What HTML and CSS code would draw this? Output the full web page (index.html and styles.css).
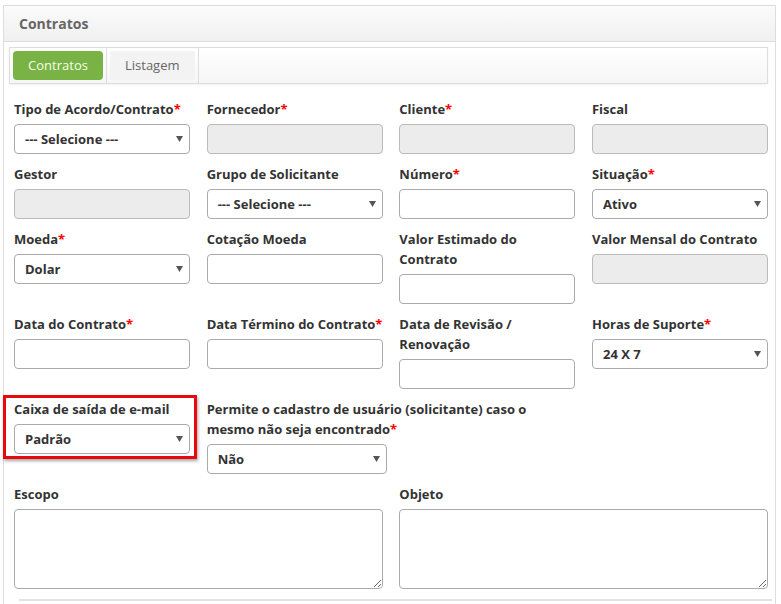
FILE: index.html
```html
<!DOCTYPE html>
<html lang="pt">
<head>
<meta charset="utf-8">
<title>Contratos</title>
<link rel="stylesheet" href="styles.css">
</head>
<body>
<div class="panel">
  <div class="panel-header">Contratos</div>
  <div class="panel-body">
    <ul class="tabs">
      <li class="tab"><span class="tab-link active">Contratos</span></li>
      <li class="tab"><span class="tab-link">Listagem</span></li>
    </ul>
    <form class="form">
      <div class="field">
        <label class="label">Tipo de Acordo/Contrato<span class="req">*</span></label>
        <div class="select"><span>--- Selecione ---</span><svg class="caret" width="7" height="6" viewBox="0 0 7 6"><path d="M0 0H7L3.5 6Z"/></svg></div>
      </div>
      <div class="field">
        <label class="label">Fornecedor<span class="req">*</span></label>
        <div class="input disabled"></div>
      </div>
      <div class="field">
        <label class="label">Cliente<span class="req">*</span></label>
        <div class="input disabled"></div>
      </div>
      <div class="field">
        <label class="label">Fiscal</label>
        <div class="input disabled"></div>
      </div>

      <div class="field">
        <label class="label">Gestor</label>
        <div class="input disabled"></div>
      </div>
      <div class="field">
        <label class="label">Grupo de Solicitante</label>
        <div class="select"><span>--- Selecione ---</span><svg class="caret" width="7" height="6" viewBox="0 0 7 6"><path d="M0 0H7L3.5 6Z"/></svg></div>
      </div>
      <div class="field">
        <label class="label">Número<span class="req">*</span></label>
        <div class="input"></div>
      </div>
      <div class="field">
        <label class="label">Situação<span class="req">*</span></label>
        <div class="select"><span>Ativo</span><svg class="caret" width="7" height="6" viewBox="0 0 7 6"><path d="M0 0H7L3.5 6Z"/></svg></div>
      </div>

      <div class="field">
        <label class="label">Moeda<span class="req">*</span></label>
        <div class="select"><span>Dolar</span><svg class="caret" width="7" height="6" viewBox="0 0 7 6"><path d="M0 0H7L3.5 6Z"/></svg></div>
      </div>
      <div class="field">
        <label class="label">Cotação Moeda</label>
        <div class="input"></div>
      </div>
      <div class="field">
        <label class="label">Valor Estimado do Contrato</label>
        <div class="input"></div>
      </div>
      <div class="field">
        <label class="label">Valor Mensal do Contrato</label>
        <div class="input disabled"></div>
      </div>

      <div class="field">
        <label class="label">Data do Contrato<span class="req">*</span></label>
        <div class="input"></div>
      </div>
      <div class="field">
        <label class="label nowrap">Data Término do Contrato<span class="req">*</span></label>
        <div class="input"></div>
      </div>
      <div class="field">
        <label class="label">Data de Revisão / Renovação</label>
        <div class="input"></div>
      </div>
      <div class="field">
        <label class="label">Horas de Suporte<span class="req">*</span></label>
        <div class="select"><span>24 X 7</span><svg class="caret" width="7" height="6" viewBox="0 0 7 6"><path d="M0 0H7L3.5 6Z"/></svg></div>
      </div>

      <div class="field highlighted">
        <label class="label">Caixa de saída de e-mail</label>
        <div class="select"><span>Padrão</span><svg class="caret" width="7" height="6" viewBox="0 0 7 6"><path d="M0 0H7L3.5 6Z"/></svg></div>
      </div>
      <div class="field span2">
        <label class="label">Permite o cadastro de usuário (solicitante) caso o mesmo não seja encontrado<span class="req">*</span></label>
        <div class="select wide"><span>Não</span><svg class="caret" width="7" height="6" viewBox="0 0 7 6"><path d="M0 0H7L3.5 6Z"/></svg></div>
      </div>

      <div class="field span2 newrow">
        <label class="label">Escopo</label>
        <textarea class="textarea"></textarea>
      </div>
      <div class="field span2">
        <label class="label">Objeto</label>
        <textarea class="textarea"></textarea>
      </div>
    </form>
    <div class="divider"></div>
  </div>
</div>
</body>
</html>
```
FILE: styles.css
```css
* { box-sizing: border-box; }
html, body { margin: 0; padding: 0; background: #fff; }
body {
  font-family: "Open Sans", "Liberation Sans", sans-serif;
  font-size: 13px;
  color: #333;
}
.panel {
  margin: 5px 0 0 3px;
  width: 773px;
  height: 640px;
  border: 1px solid #ddd;
}
.panel-header {
  height: 36px;
  padding-left: 15px;
  line-height: 35px;
  font-size: 14px;
  font-weight: 700;
  color: #666;
  background: linear-gradient(#fbfbfb, #f0f0f0);
  border-bottom: 1px solid #dcdcdc;
}
.panel-body {
  padding: 5px 0 0 5px;
}
.tabs {
  list-style: none;
  margin: 0;
  padding: 0;
  width: 759px;
  height: 37px;
  display: flex;
  border: 1px solid #ddd;
  background: linear-gradient(#fff, #f6f6f6);
  box-shadow: 0 1px 2px rgba(0,0,0,0.06);
}
.tab {
  padding: 3px;
  border-right: 1px solid #ddd;
}
.tab-link {
  display: block;
  height: 29px;
  line-height: 29px;
  padding: 0 15px;
  color: #666;
  background: #f3f3f3;
  border-radius: 2px;
}
.tab-link.active {
  width: 90px;
  text-align: center;
  padding: 0;
  background: #79b345;
  color: #f4ffe8;
  border-radius: 4px;
}
.form {
  margin: 15px 0 0 5px;
  width: 754px;
  display: grid;
  grid-template-columns: repeat(4, 1fr);
  column-gap: 16.67px;
  row-gap: 10px;
  align-items: start;
}
.field { position: relative; }
.span2 { grid-column: span 2; }
.newrow { grid-column: 1 / span 2; }
.label {
  display: block;
  font-weight: 700;
  line-height: 20px;
  margin-bottom: 5px;
  color: #333;
}
.label.nowrap { white-space: nowrap; letter-spacing: -0.05px; }
.req { color: #f00; }
.input, .select {
  height: 30px;
  border: 1px solid #aaa;
  border-radius: 4px;
  background: #fff;
}
.input.disabled {
  background: #ececec;
  border-color: #bbb;
}
.select {
  display: flex;
  align-items: center;
  justify-content: space-between;
  padding: 0 6px 0 10px;
  font-weight: 700;
  color: #333;
}
.select.wide { width: 180px; }
.caret { fill: #555; }
.textarea {
  display: block;
  width: 100%;
  height: 80px;
  border: 1px solid #aaa;
  border-radius: 4px;
  resize: both;
  margin: 0;
  font: inherit;
}
.highlighted::before {
  content: "";
  position: absolute;
  top: -4px;
  left: -11px;
  right: -7px;
  bottom: -5px;
  border: 3px solid #e8080d;
  box-shadow: 1px 2px 3px rgba(0,0,0,0.35);
  pointer-events: none;
}
.divider {
  margin: 10px 0 0 10px;
  width: 753px;
  border-top: 2px solid #e3e3e3;
}
```
